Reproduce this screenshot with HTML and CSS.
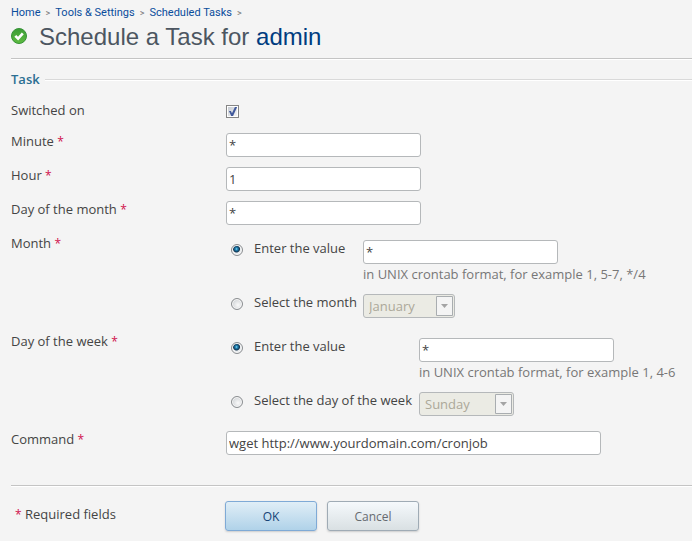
FILE: index.html
```html
<!DOCTYPE html>
<html lang="en">
<head>
<meta charset="utf-8">
<meta name="viewport" content="width=device-width, initial-scale=1">
<title>Schedule a Task</title>
<link rel="stylesheet" href="styles.css">
</head>
<body>
<header class="page-head">
  <nav class="crumbs"><a href="#">Home</a><span>&gt;</span><a href="#">Tools &amp; Settings</a><span>&gt;</span><a href="#">Scheduled Tasks</a><span>&gt;</span></nav>
  <div class="title">
    <svg class="status" viewBox="0 0 16 16" aria-hidden="true">
      <defs><linearGradient id="g" x1="0" y1="0" x2="0" y2="1"><stop offset="0" stop-color="#3b9c35"/><stop offset="1" stop-color="#5fbc42"/></linearGradient></defs>
      <circle cx="8" cy="8" r="7.5" fill="url(#g)" stroke="#369337"/>
      <path d="M4.3 7.8 7.1 10.7 11.8 5.3" fill="none" stroke="#fff" stroke-width="2.6"/>
    </svg>
    <h1>Schedule a Task for <a href="#">admin</a></h1>
  </div>
</header>
<form>
  <h2 class="section">Task</h2>
  <div class="row row-check">
    <label for="on">Switched on</label>
    <input type="checkbox" id="on" class="check" checked>
  </div>
  <div class="row">
    <label for="minute">Minute <i>*</i></label>
    <input type="text" id="minute" class="text" value="*">
  </div>
  <div class="row">
    <label for="hour">Hour <i>*</i></label>
    <input type="text" id="hour" class="text" value="1">
  </div>
  <div class="row">
    <label for="dom">Day of the month <i>*</i></label>
    <input type="text" id="dom" class="text" value="*">
  </div>
  <div class="row row-group" role="group" aria-labelledby="month-label">
    <span id="month-label">Month <i>*</i></span>
    <div class="options options-month">
      <input type="radio" name="month" id="month-value" class="radio" checked>
      <label for="month-value">Enter the value</label>
      <div>
        <input type="text" class="text" value="*" aria-label="Month value">
        <p class="hint">in UNIX crontab format, for example 1, 5-7, */4</p>
      </div>
      <input type="radio" name="month" id="month-select" class="radio">
      <label for="month-select">Select the month</label>
      <div class="select select-month">
        <select aria-label="Month" disabled><option>January</option></select>
        <svg class="arrow" viewBox="0 0 17 20" aria-hidden="true"><path class="box" d="M.5.5h16v19H.5z"/><path class="tip" d="M5 8h7L8.500 12z"/></svg>
      </div>
    </div>
  </div>
  <div class="row row-group" role="group" aria-labelledby="week-label">
    <span id="week-label">Day of the week <i>*</i></span>
    <div class="options options-week">
      <input type="radio" name="week" id="week-value" class="radio" checked>
      <label for="week-value">Enter the value</label>
      <div>
        <input type="text" class="text" value="*" aria-label="Day of the week value">
        <p class="hint">in UNIX crontab format, for example 1, 4-6</p>
      </div>
      <input type="radio" name="week" id="week-select" class="radio">
      <label for="week-select">Select the day of the week</label>
      <div class="select select-week">
        <select aria-label="Day of the week" disabled><option>Sunday</option></select>
        <svg class="arrow" viewBox="0 0 17 20" aria-hidden="true"><path class="box" d="M.5.5h16v19H.5z"/><path class="tip" d="M5 8h7L8.500 12z"/></svg>
      </div>
    </div>
  </div>
  <div class="row">
    <label for="command">Command <i>*</i></label>
    <input type="text" id="command" class="text text-wide" value="wget http://www.yourdomain.com/cronjob">
  </div>
  <footer class="actions">
    <p><i>*</i> Required fields</p>
    <div class="buttons">
      <button type="submit" class="btn btn-ok">OK</button>
      <button type="button" class="btn">Cancel</button>
    </div>
  </footer>
</form>
</body>
</html>
```
FILE: styles.css
```css
* { box-sizing: border-box; }
body {
  margin: 0;
  padding: 5px 0 0 11px;
  background: #f4f4f4;
  color: #444;
  font: 13px/17px "Open Sans", sans-serif;
}
input, select, button { font: inherit; color: inherit; margin: 0; }
i { color: #d0104c; font-size: 12px; line-height: 1; font-style: normal; }
a { color: #0a4d9c; text-decoration: none; }
p { margin: 0; }

.page-head {
  border-bottom: 1px solid #c4c4c4;
  box-shadow: 0 1px #fff;
}
.crumbs {
  display: flex;
  gap: 5px;
  font: 11px/16px Roboto, sans-serif;
}
.crumbs span { color: #777; font-size: 9px; }
.title { display: flex; gap: 12px; padding-bottom: 6px; }
.status { width: 16px; height: 16px; margin-top: 7px; }
h1 {
  margin: 1px 0 0;
  color: #4c5661;
  font: 24px/30px "Liberation Sans", Arial, sans-serif;
}
h1 a { color: #003c80; }

.section {
  display: flex;
  align-items: center;
  gap: 5px;
  margin: 12px 0 14px;
  color: #2b6f92;
  font-size: 13px;
  line-height: 17px;
  font-weight: 600;
}
.section::after {
  content: "";
  flex: 1;
  height: 2px;
  background: linear-gradient(#d9d9d9 50%, #fff 50%);
}

.row {
  display: grid;
  grid-template-columns: 215px 1fr;
  align-items: start;
  margin-bottom: 10px;
}
.row-check { margin-bottom: 14px; }
.row-group { margin-bottom: 15px; }
.text {
  display: block;
  width: 195px;
  height: 24px;
  padding: 0 2px;
  border: 1px solid #b5b8ba;
  border-radius: 3px;
  background: #fff;
}
.text-wide { width: 375px; }
.check {
  appearance: none;
  width: 13px;
  height: 13px;
  margin-top: 3px;
  border: 1px solid #858585;
  background: linear-gradient(135deg, #c6cbd2, #f6f6f6) 50% / 9px 9px no-repeat #fff;
}
.check:checked::before {
  content: "";
  display: block;
  height: 11px;
  background: #425a9c;
  clip-path: polygon(18% 45%, 36% 45%, 45% 65%, 72% 9%, 92% 9%, 55% 92%, 38% 92%);
}

.options {
  display: grid;
  align-items: start;
  row-gap: 11px;
  padding-top: 5px;
}
.options-month { grid-template-columns: 28px 109px 1fr; }
.options-week { grid-template-columns: 28px 165px 1fr; }
.radio {
  appearance: none;
  width: 12px;
  height: 12px;
  margin: 4px 0 0 5px;
  border: 1px solid #8a8d90;
  border-radius: 50%;
  background: radial-gradient(circle at 60% 60%, #fafafa, #c2c6ca);
  box-shadow: inset 0 0 0 1px #f8f8f8;
}
.radio:checked {
  background: radial-gradient(circle at 45% 40%, #9be0f8 0, #278fc0 1px, #0b3656 3px, #12304a 3px, #e8ebed 4px);
}
.hint { color: #777; padding-top: 2px; }

.select {
  display: grid;
  height: 24px;
  align-items: center;
}
.select select, .arrow { grid-area: 1 / 1; }
.select select {
  appearance: none;
  width: 100%;
  height: 24px;
  padding: 0 5px;
  border: 1px solid #b5b8ba;
  border-radius: 3px;
  background: #ebebe4;
  color: #aca899;
  opacity: 1;
}
.select-month { width: 92px; }
.select-week { width: 95px; }
.arrow {
  width: 17px;
  height: 20px;
  justify-self: end;
  margin-right: 2px;
  pointer-events: none;
}
.arrow .box { fill: #f4f4f4; stroke: #a9adb0; }
.arrow .tip { fill: #a4a4a4; }

.actions {
  display: grid;
  grid-template-columns: 214px 1fr;
  margin-top: 30px;
  padding: 15px 0 10px;
  border-top: 1px solid #c4c4c4;
  box-shadow: inset 0 1px #fff;
}
.actions p { padding: 5px 4px; }
.buttons { display: flex; gap: 10px; }
.btn {
  width: 92px;
  height: 30px;
  border: 1px solid #9fabb5;
  border-radius: 3px;
  background: linear-gradient(#f5f9fc, #d9e0e3);
  box-shadow: 0 1px 2px #ccc;
  color: #666b70;
  font-size: 12px;
}
.btn-ok {
  border-color: #7faad6;
  background: linear-gradient(#e0eef7, #b0d2e9);
  color: #174476;
}
```
